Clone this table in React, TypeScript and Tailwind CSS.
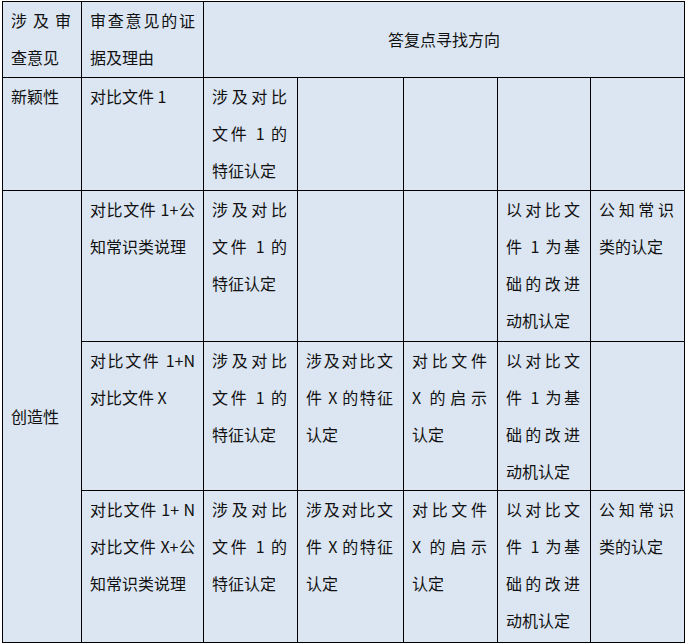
const cell =
  "border border-black align-top pl-2 pr-[10px] text-justify text-[16px] leading-[37px]";
const wide = "border border-black align-top pl-2 pr-2 text-justify text-[16px] leading-[37px]";

export default function App() {
  return (
    <div
      className="min-h-screen bg-white pt-px pl-[2px] text-[#111]"
      style={{ fontFamily: '"Noto Sans CJK SC", "Noto Sans", sans-serif' }}
    >
      <table className="table-fixed w-[682px] border-collapse bg-[#dce6f2]">
        <colgroup>
          <col className="w-[79px]" />
          <col className="w-[122px]" />
          <col className="w-[94px]" />
          <col className="w-[106px]" />
          <col className="w-[94px]" />
          <col className="w-[93px]" />
          <col className="w-[94px]" />
        </colgroup>
        <tbody>
          <tr className="h-[76px]">
            <td className={cell}>涉及审查意见</td>
            <td className={wide}>审查意见的证据及理由</td>
            <td
              colSpan={5}
              className="border border-black text-center align-middle text-[16px] leading-[37px]"
            >
              答复点寻找方向
            </td>
          </tr>
          <tr className="h-[113px]">
            <td className={cell}>新颖性</td>
            <td className={wide}>对比文件 1</td>
            <td className={cell}>涉及对比文件 1 的特征认定</td>
            <td className={cell}></td>
            <td className={cell}></td>
            <td className={cell}></td>
            <td className={cell}></td>
          </tr>
          <tr className="h-[151px]">
            <td
              rowSpan={3}
              className="border border-black align-middle pl-2 text-[16px] leading-[37px]"
            >
              创造性
            </td>
            <td className={wide}>对比文件 1+公知常识类说理</td>
            <td className={cell}>涉及对比文件 1 的特征认定</td>
            <td className={cell}></td>
            <td className={cell}></td>
            <td className={cell}>以对比文件 1 为基础的改进动机认定</td>
            <td className={cell}>公知常识类的认定</td>
          </tr>
          <tr className="h-[149px]">
            <td className={wide}>对比文件 1+N 对比文件 X</td>
            <td className={cell}>涉及对比文件 1 的特征认定</td>
            <td className={cell}>涉及对比文件 X 的特征认定</td>
            <td className={cell}>对比文件 X 的启示认定</td>
            <td className={cell}>以对比文件 1 为基础的改进动机认定</td>
            <td className={cell}></td>
          </tr>
          <tr className="h-[152px]">
            <td className={wide}>对比文件 1+ N 对比文件 X+公知常识类说理</td>
            <td className={cell}>涉及对比文件 1 的特征认定</td>
            <td className={cell}>涉及对比文件 X 的特征认定</td>
            <td className={cell}>对比文件 X 的启示认定</td>
            <td className={cell}>以对比文件 1 为基础的改进动机认定</td>
            <td className={cell}>公知常识类的认定</td>
          </tr>
        </tbody>
      </table>
    </div>
  );
}
